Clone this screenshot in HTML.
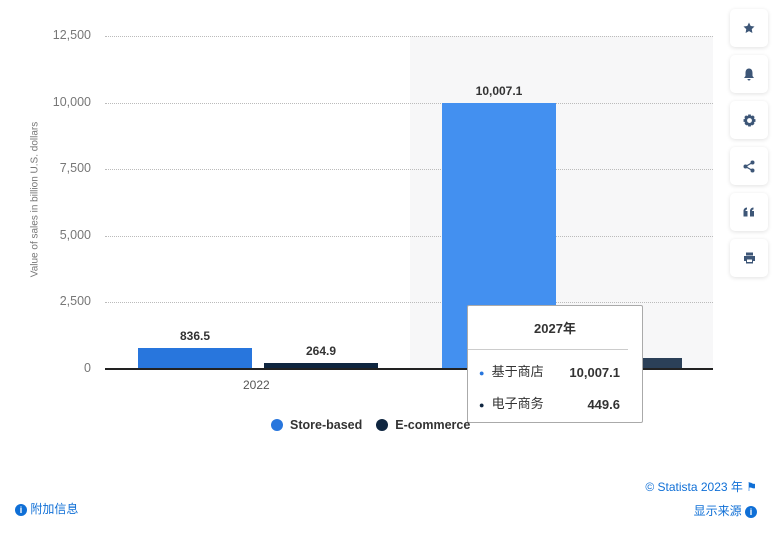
<!DOCTYPE html>
<html><head><meta charset="utf-8"><style>
body{margin:0;width:777px;height:535px;background:#fff;position:relative;overflow:hidden;font-family:"Liberation Sans","Noto Sans CJK SC",sans-serif}
.a{position:absolute}
.grid{position:absolute;left:105px;width:608px;border-top:1px dotted #bbb}
.yl{position:absolute;right:686px;font-size:12.5px;color:#777;text-align:right}
.btn{position:absolute;left:730px;width:38px;height:38px;background:#fff;border-radius:5px;box-shadow:0 1px 4px rgba(0,0,0,.12);display:flex;align-items:center;justify-content:center}
.lbl{position:absolute;font-size:12px;font-weight:bold;color:#333;text-align:center;width:114px}
</style></head><body>
<div class="a" style="left:410px;top:36px;width:303px;height:333px;background:#f7f7f8"></div>
<div class="grid" style="top:36px"></div>
<div class="grid" style="top:103px"></div>
<div class="grid" style="top:169px"></div>
<div class="grid" style="top:236px"></div>
<div class="grid" style="top:302px"></div>
<div class="yl" style="top:28px">12,500</div>
<div class="yl" style="top:95px">10,000</div>
<div class="yl" style="top:161px">7,500</div>
<div class="yl" style="top:228px">5,000</div>
<div class="yl" style="top:294px">2,500</div>
<div class="yl" style="top:361px">0</div>
<div class="a" style="left:-55px;top:194px;width:180px;transform:rotate(-90deg);font-size:10px;color:#777;text-align:center">Value of sales in billion U.S. dollars</div>
<div class="a" style="left:138px;top:348px;width:114px;height:21px;background:#2876dd"></div>
<div class="a" style="left:264px;top:363px;width:114px;height:6px;background:#0f2640"></div>
<div class="a" style="left:442px;top:103px;width:114px;height:266px;background:#4390f0"></div>
<div class="a" style="left:568px;top:358px;width:114px;height:11px;background:#2b4058"></div>
<div class="lbl" style="left:138px;top:329px">836.5</div>
<div class="lbl" style="left:264px;top:344px">264.9</div>
<div class="lbl" style="left:442px;top:84px">10,007.1</div>
<div class="a" style="left:105px;top:368px;width:608px;height:1.5px;background:#222"></div>
<div class="a" style="left:243px;top:378px;font-size:12px;color:#555">2022</div>
<div class="a" style="left:467px;top:305px;width:174px;height:116px;background:#fff;border:1px solid #aaa;border-radius:2px">
<div class="a" style="left:0;width:174px;top:12px;text-align:center;font-size:13px;font-weight:bold;color:#333">2027年</div>
<div class="a" style="left:0;top:43px;width:160px;border-top:1px solid #ccc"></div>
<div class="a" style="left:11px;top:55px;font-size:13px;color:#333"><span style="color:#2876dd;font-size:9px">●</span>&nbsp; 基于商店</div>
<div class="a" style="right:22px;top:59px;font-size:13px;font-weight:bold;color:#333">10,007.1</div>
<div class="a" style="left:11px;top:87px;font-size:13px;color:#333"><span style="color:#0f2640;font-size:9px">●</span>&nbsp; 电子商务</div>
<div class="a" style="right:22px;top:91px;font-size:13px;font-weight:bold;color:#333">449.6</div>
</div>
<div class="a" style="left:271px;top:418px;font-size:12.5px;font-weight:bold;color:#333;display:flex;align-items:center">
<span style="width:12px;height:12px;border-radius:6px;background:#2876dd;display:inline-block;margin-right:7px"></span>Store-based
<span style="width:12px;height:12px;border-radius:6px;background:#0f2640;display:inline-block;margin:0 7px 0 14px"></span>E-commerce</div>
<div class="a" style="right:20px;top:478px;font-size:12px;color:#0f6fd6">© Statista 2023 年 ⚑</div>
<div class="a" style="right:20px;top:502px;font-size:12px;color:#0f6fd6">显示来源 <span style="display:inline-block;width:12px;height:12px;border-radius:6px;background:#0f6fd6;color:#fff;font-size:9px;text-align:center;line-height:12px;font-weight:bold">i</span></div>
<div class="a" style="left:15px;top:500px;font-size:12px;color:#0f6fd6"><span style="display:inline-block;width:12px;height:12px;border-radius:6px;background:#0f6fd6;color:#fff;font-size:9px;text-align:center;line-height:12px;font-weight:bold">i</span> 附加信息</div>
<div class="btn" style="top:9px"><svg width="12" height="12" viewBox="0 0 24 24"><path fill="#3d5677" d="M12 1l3.4 7 7.6 1-5.5 5.3 1.3 7.6L12 18.3l-6.8 3.6 1.3-7.6L1 9l7.6-1z"/></svg></div>
<div class="btn" style="top:55px"><svg width="12" height="13" viewBox="0 0 24 26"><path fill="#3d5677" d="M12 1c5 0 7 4 7 9v6l3 4H2l3-4v-6c0-5 2-9 7-9zM9 22h6a3 3 0 0 1-6 0z"/></svg></div>
<div class="btn" style="top:101px"><svg width="13" height="13" viewBox="0 0 24 24"><circle cx="12" cy="12" r="7" fill="none" stroke="#3d5677" stroke-width="5"/><path stroke="#3d5677" stroke-width="5" d="M12 1v22M1 12h22M4 4l16 16M20 4L4 20" stroke-dasharray="4 14"/></svg></div>
<div class="btn" style="top:147px"><svg width="12" height="13" viewBox="0 0 24 26"><circle cx="19" cy="5" r="4" fill="#3d5677"/><circle cx="5" cy="13" r="4" fill="#3d5677"/><circle cx="19" cy="21" r="4" fill="#3d5677"/><path d="M19 5L5 13l14 8" stroke="#3d5677" stroke-width="2.5" fill="none"/></svg></div>
<div class="btn" style="top:193px"><svg width="12" height="10" viewBox="0 0 24 20"><path fill="#3d5677" d="M1 8c0-4 3-7 7-7v4c-2 0-3 1-3 3h4v11H1zM14 8c0-4 3-7 7-7v4c-2 0-3 1-3 3h4v11h-8z"/></svg></div>
<div class="btn" style="top:239px"><svg width="13" height="12" viewBox="0 0 26 24"><path fill="#3d5677" d="M6 1h14v6H6zM2 8h22v10h-4v5H6v-5H2zM8 15v5h10v-5z"/></svg></div>
</body></html>
